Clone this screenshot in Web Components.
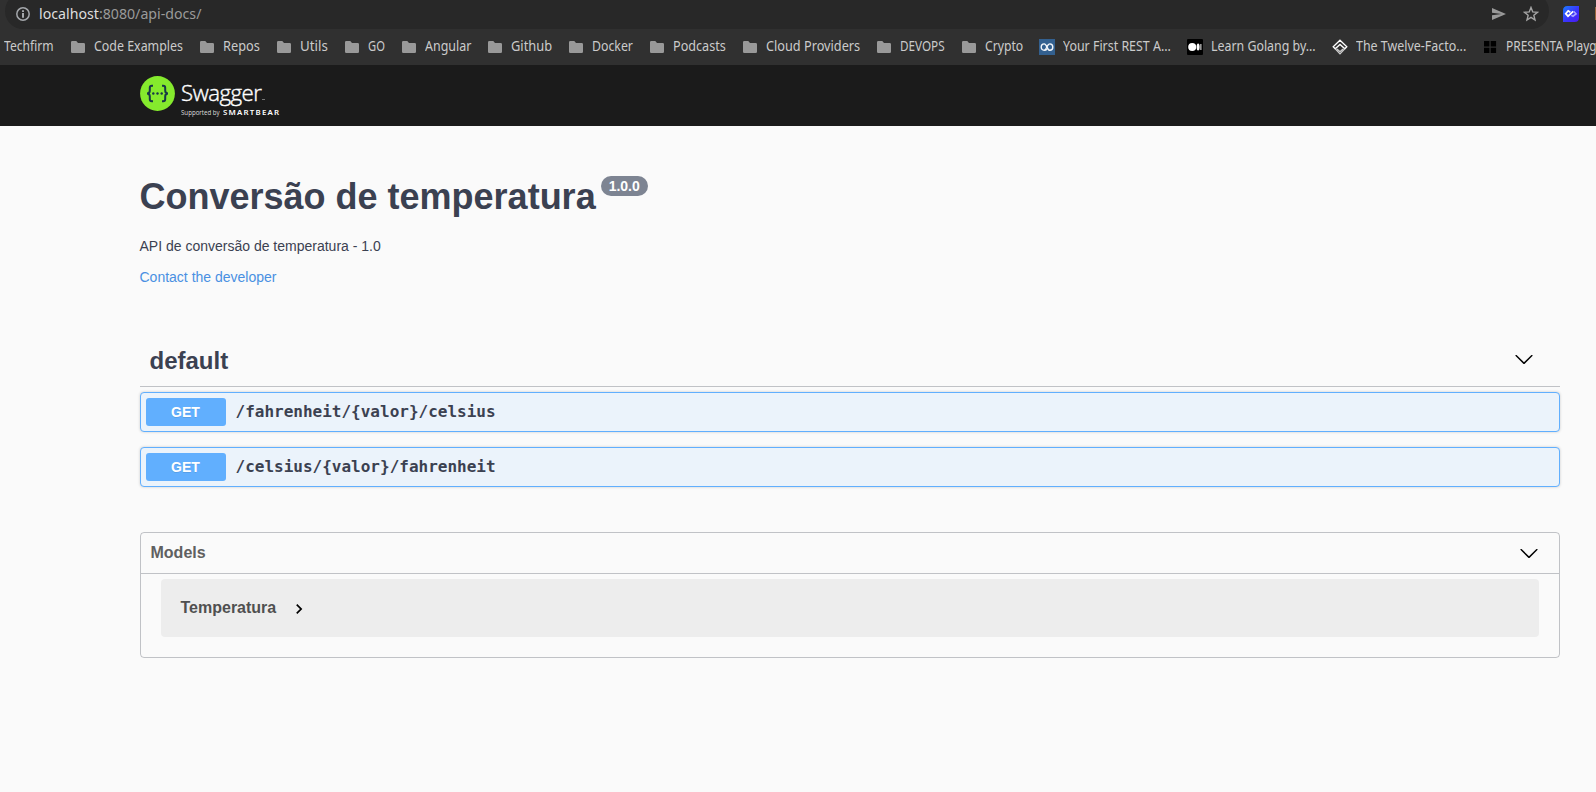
<!DOCTYPE html>
<html lang="pt-BR">
<head>
<meta charset="utf-8">
<title>Swagger UI</title>
<style>
html,body{margin:0;height:100%;overflow:hidden}
body{background:#fafafa;font-family:"Liberation Sans",Arial,sans-serif}
</style>
</head>
<body>
<browser-toolbar></browser-toolbar>
<bookmarks-bar>
  <bookmark-item kind="none" w="50">Techfirm</bookmark-item>
  <bookmark-item w="89">Code Examples</bookmark-item>
  <bookmark-item w="37">Repos</bookmark-item>
  <bookmark-item w="28">Utils</bookmark-item>
  <bookmark-item w="17">GO</bookmark-item>
  <bookmark-item w="46">Angular</bookmark-item>
  <bookmark-item w="41">Github</bookmark-item>
  <bookmark-item w="41">Docker</bookmark-item>
  <bookmark-item w="53">Podcasts</bookmark-item>
  <bookmark-item w="94">Cloud Providers</bookmark-item>
  <bookmark-item w="45">DEVOPS</bookmark-item>
  <bookmark-item w="38">Crypto</bookmark-item>
  <bookmark-item kind="rest" w="108">Your First REST A...</bookmark-item>
  <bookmark-item kind="medium" w="105">Learn Golang by...</bookmark-item>
  <bookmark-item kind="twelve" w="110">The Twelve-Facto...</bookmark-item>
  <bookmark-item kind="presenta" w="91">PRESENTA Playg</bookmark-item>
</bookmarks-bar>
<swagger-topbar></swagger-topbar>
<swagger-page>
  <api-info version="1.0.0">
    Conversão de temperatura
    <span slot="description">API de conversão de temperatura - 1.0</span>
    <span slot="contact">Contact the developer</span>
  </api-info>
  <tag-section name="default">
    <api-operation method="GET">/fahrenheit/{valor}/celsius</api-operation>
    <api-operation method="GET">/celsius/{valor}/fahrenheit</api-operation>
  </tag-section>
  <model-list><model-item>Temperatura</model-item></model-list>
</swagger-page>
<script>
const define = (name, html, setup) => customElements.define(name, class extends HTMLElement {
  constructor() {
    super();
    const t = document.createElement('template');
    t.innerHTML = html;
    this.attachShadow({mode: 'open'}).append(t.content.cloneNode(true));
  }
  connectedCallback() { if (setup) setup(this, this.shadowRoot); }
});

/* Text squeezed horizontally to a given width. */
define('fit-text', `
<style>
:host{display:block;flex:none;white-space:nowrap}
span{display:inline-block;transform-origin:0 50%}
</style><span><slot></slot></span>`, (el, root) => {
  const w = +el.getAttribute('w');
  el.style.width = w + 'px';
  const s = root.querySelector('span');
  s.style.transform = 'scaleX(' + w / s.offsetWidth + ')';
});

define('browser-toolbar', `
<style>
:host{display:flex;height:29px;background:#303030;overflow:hidden;font:14.4px/28px "Noto Sans",sans-serif;color:#9a9a9a}
.omni{box-sizing:border-box;display:flex;align-items:center;flex:none;width:1544px;height:36px;margin:-7px 0 0 5px;padding:7px 10px 1px 11px;border-radius:18px;background:#282828}
.omni svg{flex:none}
fit-text{margin:-1px 0 0 9px;flex:none}
b{font-weight:400;color:#dedede}
.gap{flex:1}
.ext{margin:6px 0 0 14px;flex:none}
.next{margin:7px 0 0 16px;flex:none;width:12px;height:13px;background:#98643a}
</style>
<div class="omni">
<svg width="14" height="14" viewBox="0 0 14 14"><circle cx="7" cy="7" r="6.2" fill="none" stroke="#a4a7ab" stroke-width="1.5"/><path d="M6.1 3.2h1.8v1.8H6.1zM6.1 6h1.8v4.7H6.1z" fill="#b4b7bb"/></svg>
<fit-text w="162.5"><b>localhost</b>:8080/api-docs/</fit-text>
<span class="gap"></span>
<svg width="14" height="12" viewBox="0 0 14 12" fill="#999"><path d="M0 0L14 6L0 12V7.3L9.5 6L0 4.7Z"/></svg>
<svg width="16" height="16" viewBox="0 0 14 14" style="margin:0 0 0 17px"><path d="M7 1.3l1.55 3.9 4.1.3-3.15 2.65 1 4.1L7 10l-3.5 2.25 1-4.1L1.35 5.5l4.1-.3z" fill="none" stroke="#a4a4a4" stroke-width="1.25"/></svg>
</div>
<svg class="ext" width="16" height="16" viewBox="0 0 16 16"><defs><linearGradient id="g" x1="0" y1="0" x2="1" y2="1"><stop offset="0" stop-color="#1b7cff"/><stop offset=".55" stop-color="#3a34fa"/><stop offset="1" stop-color="#4b19f5"/></linearGradient></defs><path d="M4.5 0H16V11.5Q16 16 11.5 16H0V4.5Q0 0 4.5 0Z" fill="url(#g)"/><path d="M7.3 6.2L5.2 4.9 2.7 7.7 5 10.2 10.2 5.3" fill="none" stroke="#fff" stroke-width="1.7"/><path d="M8.3 9.2l1.7 1 3-2.4-2.4-2.6" fill="none" stroke="#aaa6ff" stroke-width="1.6"/></svg>
<span class="next"></span>`);

define('bookmarks-bar', `
<style>:host{box-sizing:border-box;display:flex;align-items:center;gap:16px;height:36px;padding:0 0 1px 4px;background:#303030;overflow:hidden;color:#cbcbcb;font:13.8px/20px "Noto Sans",sans-serif}</style><slot></slot>`);

const icons = {
  none: '',
  folder: '<svg width="16" height="16" viewBox="0 0 16 16"><path d="M2.3 2H6.3L8 4H13.7Q15 4 15 5.2V12.7Q15 14 13.7 14H2.3Q1 14 1 12.7V3.3Q1 2 2.3 2Z" fill="#999"/></svg>',
  rest: '<svg width="16" height="16" viewBox="0 0 16 16"><path d="M0 0h16v16H0z" fill="#33608f"/><path d="M8 10.2C7.2 11 6.3 11.3 5.2 11.3 3.3 11.3 2.2 9.9 2.2 8.1S3.5 4.9 5.2 4.9c2.8 0 2.8 6.4 5.6 6.4 1.7 0 3-1.4 3-3.2s-1.3-3.2-3-3.2c-2.8 0-2.8 5.3-5.3 6.2" fill="none" stroke="#f3f6fa" stroke-width="1.4"/></svg>',
  medium: '<svg width="16" height="16" viewBox="0 0 16 16"><rect width="16" height="16" rx="1" fill="#000"/><circle cx="5.2" cy="8" r="4" fill="#fff"/><ellipse cx="11.1" cy="8" rx="1.5" ry="3.6" fill="#fff"/><path d="M13.2 5h1.3v6h-1.3z" fill="#bbb"/></svg>',
  twelve: '<svg width="16" height="16" viewBox="0 0 16 16" fill="none" stroke="#fff"><path d="M8 1.2L14.8 7.8 12.8 9.8 8 5.4 3.2 9.8 1.2 7.8Z" stroke-width="1.3"/><path d="M3.2 9.8L8 14.8l4.8-5M5 10L8 12.6 11 10" stroke="#ccc" stroke-width="1.2"/></svg>',
  presenta: '<svg width="16" height="16" viewBox="0 0 16 16"><path d="M2 2h5.4v5.4H2zM8.7 2h5.4v5.4H8.7zM2 8.7h5.4v5.4H2zM8.7 8.7h5.4v5.4H8.7z" fill="#000"/></svg>'
};
define('bookmark-item', `
<style>:host{display:flex;align-items:center;height:20px;gap:8px;flex:none}svg{display:block;flex:none;margin-top:1px}fit-text{margin-top:-2px}</style>`, (el, root) => {
  const t = document.createElement('template');
  t.innerHTML = icons[el.getAttribute('kind') || 'folder'] + '<fit-text w="' + el.getAttribute('w') + '"><slot></slot></fit-text>';
  root.append(t.content.cloneNode(true));
});

define('swagger-topbar', `
<style>
:host{box-sizing:border-box;display:flex;gap:7px;height:61px;padding:11px 0 0 139.5px;background:#1b1b1b;color:#fff;font-family:"Open Sans",sans-serif}
svg{flex:none}
.words{display:flex;flex-direction:column;margin-left:-.5px}
.top{display:flex;height:32px;font-size:22.5px;line-height:33px;letter-spacing:-.5px;font-weight:300;-webkit-text-stroke:.4px #fff}
.dot{width:3px;height:1px;background:#777;margin:23px 0 0 1px}
.sub{display:flex;gap:3px;align-items:center;height:9px;line-height:9px;font-size:6.3px}
.sub fit-text:first-child{color:#ddd}
.sub b{font-size:7.8px;letter-spacing:1.2px;font-weight:600;font-family:"Noto Sans",sans-serif}
</style>
<svg width="35" height="35" viewBox="0 0 35 35"><circle cx="17.5" cy="17.5" r="17.4" fill="#85ea2d"/><g fill="none" stroke="#173647" stroke-width="2"><path d="M13 9.7h-1.2q-2 0-2 2v2.8q0 3-2.8 3 2.8 0 2.8 3v2.8q0 2 2 2H13M22 9.7h1.2q2 0 2 2v2.8q0 3 2.8 3-2.8 0-2.8 3v2.8q0 2-2 2H22"/></g><g fill="#173647"><circle cx="13.3" cy="17.5" r="1.2"/><circle cx="17.5" cy="17.5" r="1.2"/><circle cx="21.7" cy="17.5" r="1.2"/></g></svg>
<div class="words"><div class="top"><fit-text w="80">Swagger</fit-text><i class="dot"></i></div>
<div class="sub"><fit-text w="39">Supported by</fit-text><fit-text w="57.5"><b>SMARTBEAR</b></fit-text></div></div>`);

define('swagger-page', `<style>:host{display:block;width:1420px;margin-left:139.5px;color:#3b4151}</style><slot></slot>`);

define('api-info', `
<style>
:host{display:block;padding-top:50px;height:140px;font-size:14px;line-height:16px}
h2{display:flex;align-items:flex-start;margin:0;font-size:36px;line-height:41px;height:41px;font-weight:700}
small{margin:0 0 0 5px;height:20px;padding:0 8px;border-radius:10px;background:#7d8492;color:#fff;font-size:14px;line-height:20px}
p{margin:21px 0 0}
a{display:block;margin-top:15px;color:#4990e2}
</style>
<h2><span><slot></slot></span><small></small></h2><p><slot name="description"></slot></p><a><slot name="contact"></slot></a>`,
(el, root) => root.querySelector('small').textContent = el.getAttribute('version'));

define('chevron-down', `<style>:host{display:block}svg{display:block}</style><svg width="20" height="20" viewBox="0 0 20 20"><path d="M17.418 6.109c.272-.268.709-.268.979 0s.271.701 0 .969l-7.908 7.83c-.27.268-.707.268-.979 0l-7.908-7.83c-.27-.268-.27-.701 0-.969.271-.268.709-.268.979 0L10 13.25l7.418-7.141z"/></svg>`);

define('tag-section', `
<style>
:host{display:block;padding-top:20px}
h4{box-sizing:border-box;display:flex;align-items:center;justify-content:space-between;height:51px;margin:0 0 5px;padding:0 26px 0 10px;border-bottom:1px solid rgba(59,65,81,.3);font-size:24px;line-height:28px}
div{display:flex;flex-direction:column;gap:15px}
chevron-down{margin-top:-5px}
</style><h4><span></span><chevron-down></chevron-down></h4><div><slot></slot></div>`,
(el, root) => root.querySelector('span').textContent = el.getAttribute('name'));

define('api-operation', `
<style>
:host{box-sizing:border-box;display:flex;align-items:center;height:40px;padding:5px;border:1px solid #61affe;border-radius:4px;background:#ebf3fb;box-shadow:0 0 3px rgba(0,0,0,.19)}
b{width:80px;height:28px;border-radius:3px;background:#61affe;color:#fff;font-size:14px;line-height:28px;text-align:center;text-shadow:0 1px 0 rgba(0,0,0,.1)}
code{padding:0 10px;font:600 16px/20px "DejaVu Sans Mono",monospace}
</style><b></b><code><slot></slot></code>`,
(el, root) => root.querySelector('b').textContent = el.getAttribute('method'));

define('model-list', `
<style>
:host{box-sizing:border-box;display:block;margin-top:45px;height:126px;border:1px solid rgba(59,65,81,.3);border-radius:4px}
h4{box-sizing:border-box;display:flex;align-items:center;justify-content:space-between;height:41px;margin:0 0 5px;padding:0 20px 0 10px;border-bottom:1px solid rgba(59,65,81,.3);font-size:16px;color:#606060}
</style><h4><span>Models</span><chevron-down></chevron-down></h4><slot></slot>`);

define('model-item', `
<style>
:host{box-sizing:border-box;display:flex;align-items:center;height:58px;margin:0 20px;padding:0 20px;border-radius:4px;background:rgba(0,0,0,.05);color:#505050;font-size:16px;font-weight:700}
svg{margin:2px 0 0 13px}
</style><slot></slot><svg width="20" height="20" viewBox="0 0 24 24"><path d="M10 6L8.59 7.41 13.17 12l-4.58 4.59L10 18l6-6z"/></svg>`);
</script>
</body>
</html>
